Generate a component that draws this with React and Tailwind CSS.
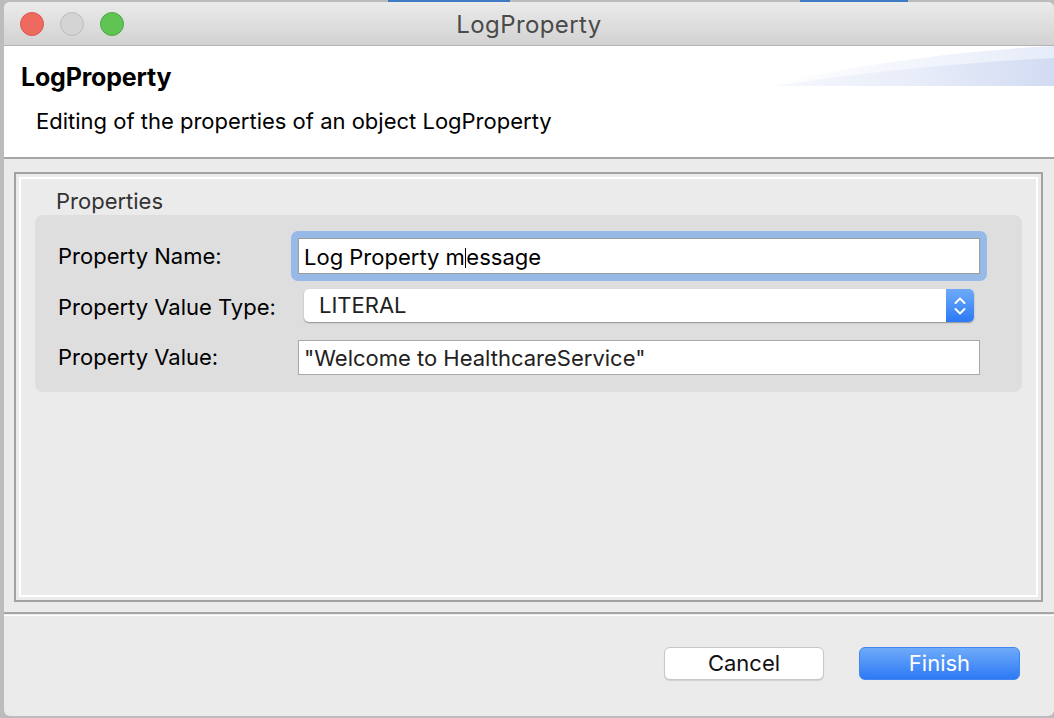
import React from 'react';

const Light = ({ color }) => (
    <div className={`w-[24px] h-[24px] rounded-full ${color}`} />
);

const Stepper = () => (
    <div className="w-[28px] h-full rounded-r-[5px] bg-gradient-to-b from-[#6eaaf8] to-[#2a78f5] flex items-center justify-center">
        <svg width="14" height="22" viewBox="0 0 14 22" fill="none" stroke="white" strokeWidth="2" strokeLinecap="round" strokeLinejoin="round">
            <polyline points="2.5 8 7 3.5 11.5 8" />
            <polyline points="2.5 14 7 18.5 11.5 14" />
        </svg>
    </div>
);

export default function App() {
    return (
        <div className="w-[1054px] h-[718px] bg-[#bcbcbc] overflow-hidden font-['Inter','Liberation_Sans',sans-serif] text-black">
            {/* strip of the app behind the window */}
            <div className="h-[2px] flex">
                <div className="w-[388px]" />
                <div className="w-[122px] bg-[#3d7cc4]" />
                <div className="w-[290px]" />
                <div className="w-[108px] bg-[#3d7cc4]" />
            </div>

            <div className="ml-[4px] w-[1050px] h-[714px] rounded-[6px] overflow-hidden bg-[#ebebeb] flex flex-col">
                {/* Title bar */}
                <div className="relative h-[44px] shrink-0 bg-gradient-to-b from-[#ebebeb] to-[#d2d2d2] border-b border-[#b4b4b4] flex items-center pl-[16px] gap-[16px]">
                    <Light color="bg-[#ee6a5f] border border-[#d9564b]" />
                    <Light color="bg-[#d4d4d4] border border-[#bdbdbd]" />
                    <Light color="bg-[#5fc454] border border-[#4caa42]" />
                    <div className="absolute inset-0 flex items-center justify-center text-[24px] tracking-[0.4px] text-[#4a4a4a] pt-[2px]">
                        LogProperty
                    </div>
                </div>

                {/* Header */}
                <div className="relative h-[111px] shrink-0 bg-white pl-[17px]">
                    <svg className="absolute top-0 right-0" width="290" height="40" viewBox="0 0 290 40">
                        <defs>
                            <linearGradient id="sw1" x1="0" y1="0" x2="1" y2="0">
                                <stop offset="0" stopColor="#ffffff" />
                                <stop offset="1" stopColor="#e6ecf9" />
                            </linearGradient>
                            <linearGradient id="sw2" x1="0" y1="0" x2="1" y2="0">
                                <stop offset="0" stopColor="#f6f8fd" />
                                <stop offset="0.5" stopColor="#e8edf9" />
                                <stop offset="1" stopColor="#d2dbf2" />
                            </linearGradient>
                        </defs>
                        <path d="M290 0 L290 40 L0 40 C70 24 170 6 290 0 Z" fill="url(#sw1)" />
                        <path d="M290 12 C200 16 100 26 10 40 L290 40 Z" fill="url(#sw2)" />
                    </svg>
                    <div className="pt-[16px] text-[25px] font-bold leading-[30px] tracking-[-0.2px]">LogProperty</div>
                    <div className="pt-[15px] pl-[15px] text-[22px] leading-[28px]">
                        Editing of the properties of an object LogProperty
                    </div>
                </div>
                <div className="h-[2px] shrink-0 bg-[#a6a6a6]" />

                {/* Body */}
                <div className="h-[453px] shrink-0 pt-[13px] pl-[10px] pr-[11px] pb-[10px]">
                    <div className="h-full border-2 border-[#a2a2a2] p-[3px]">
                        <div className="h-full border-2 border-white flex flex-col">
                            <div className="pt-[10px] pl-[35px] text-[22px] leading-[24px] text-[#333]">Properties</div>
                            <div className="mt-[2px] ml-[14px] mr-[14px] rounded-[8px] bg-[#dedede] pl-[23px] pr-[35px] pt-[16px] pb-[17px] flex flex-col text-[22px]">
                                <div className="flex items-center h-[50px]">
                                    <div className="w-[233px] pt-[1px]">Property Name:</div>
                                    <div className="flex-1 h-full rounded-[7px] bg-[#97b9e8] p-[7px]">
                                        <div className="h-full bg-white border border-[#9c9c9c] flex items-center pl-[5px] pt-[3px]">
                                            <span>Log Property m</span>
                                            <span className="w-[1.5px] h-[20px] bg-black" />
                                            <span>essage</span>
                                        </div>
                                    </div>
                                </div>
                                <div className="flex items-center h-[33px] mt-[8px]">
                                    <div className="w-[233px] pt-[3px]">Property Value Type:</div>
                                    <div className="flex-1 h-full mx-[13px] flex rounded-[5px] bg-white shadow-[0_1px_1.5px_rgba(0,0,0,0.35)]">
                                        <div className="flex-1 flex items-center pl-[15px] text-[#222]">LITERAL</div>
                                        <Stepper />
                                    </div>
                                </div>
                                <div className="flex items-center h-[35px] mt-[18px]">
                                    <div className="w-[233px]">Property Value:</div>
                                    <div className="flex-1 h-full mx-[7px] bg-white border border-[#a8a8a8] flex items-center pl-[5px] pt-[2px] text-[#222]">
                                        "Welcome to HealthcareService"
                                    </div>
                                </div>
                            </div>
                        </div>
                    </div>
                </div>

                {/* Footer */}
                <div className="h-[2px] shrink-0 bg-[#a6a6a6]" />
                <div className="h-[1px] shrink-0 bg-[#ebebeb]" />
                <div className="h-[1px] shrink-0 bg-white" />
                <div className="flex-1 flex justify-end items-start pt-[31px] pr-[34px] gap-[35px]">
                    <button className="w-[160px] h-[33px] rounded-[6px] bg-white border border-[#c6c6c6] shadow-[0_1px_1px_rgba(0,0,0,0.12)] text-[22px] text-[#111] flex items-center justify-center">
                        Cancel
                    </button>
                    <button className="w-[161px] h-[33px] rounded-[6px] bg-gradient-to-b from-[#6eaaf8] to-[#2c79f5] border border-[#3f86f0] text-[22px] text-white flex items-center justify-center">
                        Finish
                    </button>
                </div>
            </div>
        </div>
    );
}
